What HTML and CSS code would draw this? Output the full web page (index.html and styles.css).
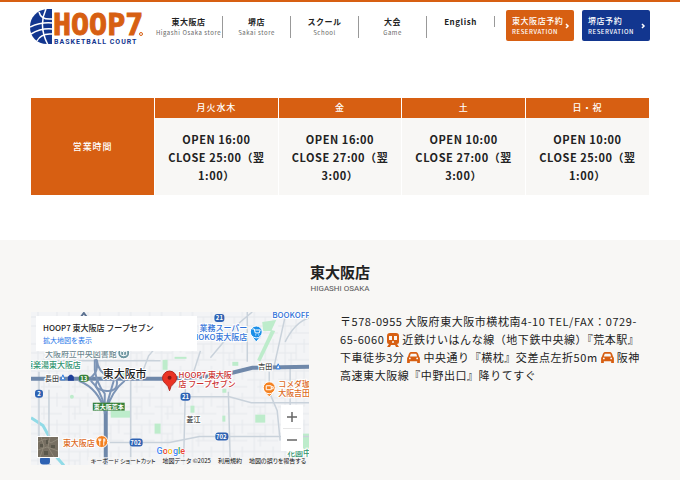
FILE: index.html
```html
<!DOCTYPE html>
<html lang="ja">
<head>
    <meta charset="UTF-8">
    <meta name="viewport" content="width=device-width, initial-scale=1.0">
    <title>HOOP7 BASKETBALL COURT</title>
    <link rel="stylesheet" href="styles.css">
</head>
<body>
    <header class="header">
        <a class="logo" href="#" aria-label="HOOP7 BASKETBALL COURT">
            <svg width="114" height="38" viewBox="0 0 114 38">
                <path d="M22 0H17C7 1 0 8 0 18s7 17 17 17h5z" fill="#12368f"/>
                <g fill="none" stroke="#fff" stroke-width="1.5">
                    <path d="M0 18q11-5 22-4"/>
                    <path d="M9 3q2 8 13 7"/>
                    <path d="M1 25q10-6 21-5"/>
                    <path d="M7 32q4-8 15-7"/>
                    <path d="M16 0q-8 17 2 36"/>
                </g>
                <text class="logo-name" x="23" y="26">HOOP7</text>
                <circle cx="111" cy="25" r="1.5" fill="none" stroke="#d75f12"/>
                <text class="logo-sub" x="24" y="35">BASKETBALL COURT</text>
            </svg>
        </a>
        <nav>
            <ul class="nav">
                <li><a href="#">東大阪店<span>Higashi Osaka store</span></a></li>
                <li><a href="#">堺店<span>Sakai store</span></a></li>
                <li><a href="#">スクール<span>School</span></a></li>
                <li><a href="#">大会<span>Game</span></a></li>
                <li><a href="#">English</a></li>
            </ul>
        </nav>
        <div class="reserve">
            <a class="reserve-btn" href="#">
                <div>東大阪店予約<span>RESERVATION</span></div>
                <svg width="5" height="6" viewBox="0 0 5 6"><path d="M1 1l2 2-2 2"/></svg>
            </a>
            <a class="reserve-btn blue" href="#">
                <div>堺店予約<span>RESERVATION</span></div>
                <svg width="5" height="6" viewBox="0 0 5 6"><path d="M1 1l2 2-2 2"/></svg>
            </a>
        </div>
    </header>

    <main>
        <section class="hours">
            <table>
                <tr>
                    <th rowspan="2" scope="row">営業時間</th>
                    <th scope="col">月火水木</th>
                    <th scope="col">金</th>
                    <th scope="col">土</th>
                    <th scope="col">日・祝</th>
                </tr>
                <tr>
                    <td>OPEN 16:00<br>CLOSE 25:00（翌1:00）</td>
                    <td>OPEN 16:00<br>CLOSE 27:00（翌3:00）</td>
                    <td>OPEN 10:00<br>CLOSE 27:00（翌3:00）</td>
                    <td>OPEN 10:00<br>CLOSE 25:00（翌1:00）</td>
                </tr>
            </table>
        </section>

        <section class="access">
            <h2>東大阪店<span>HIGASHI OSAKA</span></h2>
            <div class="access-row">
                <div class="map">
                    <svg class="map-canvas" viewBox="0 0 279 154">
                        <defs>
                            <pattern id="streets" width="31" height="27" patternUnits="userSpaceOnUse">
                                <path d="M0 5h31M0 14h18M10 21h21M7 0v27M18 5v16M26 0v14M13 14v13" fill="none" stroke="#e5e8ec"/>
                            </pattern>
                        </defs>
                        <rect width="279" height="154" fill="#f3f4f6"/>
                        <rect width="279" height="154" fill="url(#streets)"/>

                        <!-- parks -->
                        <g fill="#bdeccb">
                            <path d="M232 10l14-2-5 11h-8z"/>
                            <path d="M241 18l4 1-15 31-3-2z"/>
                            <rect x="80" y="99" width="20" height="7"/>
                            <rect x="225" y="103" width="10" height="8"/>
                            <rect x="90" y="60" width="7" height="6"/>
                            <rect x="202" y="50" width="6" height="4"/>
                            <rect x="160" y="94" width="4" height="7"/>
                            <rect x="192" y="104" width="3" height="6"/>
                            <rect x="192" y="77" width="4" height="4"/>
                            <rect x="124" y="112" width="6" height="10"/>
                            <rect x="132" y="48" width="5" height="10"/>
                            <rect x="272" y="122" width="7" height="17"/>
                            <circle cx="41" cy="85" r="2"/>
                            <path d="M144 45h12v2h-12z"/>
                        </g>

                        <!-- river -->
                        <path d="M0 106l12 8 10 18 4 14 7 8" fill="none" stroke="#91dbe7" stroke-width="3"/>

                        <!-- local roads -->
                        <g fill="none" stroke="#c9d2db" stroke-width="1.5">
                            <path d="M0 49h130M8 60v80q4 8 12 14M18 78v76M100 68v86"/>
                            <path d="M155 72l-2 82M198 80l2 74M217 0v50M180 46l30-36 12-10"/>
                            <path d="M79 131h60l30-6h110"/>
                            <path d="M155 85h44l22 6h58"/>
                            <path d="M239 60v20l8 19 3 30M255 30q10-20 24-24M260 54v60"/>
                            <path d="M256 0l-12 54"/>
                            <path d="M109 68l9-24 17-20M170 39l-9 28"/>
                        </g>

                        <!-- expressway -->
                        <g fill="none" stroke="#6f88aa" stroke-width="4">
                            <path d="M0 67h136l54-3 32-8 57-1"/>
                            <path d="M75 154V97"/>
                        </g>
                        <g fill="none" stroke="#7c94b6" stroke-width="2">
                            <path d="M64 44v14q2 14 10 24v20"/>
                            <path d="M60 66q9-7 5-20M79 66q-12-6-13-18"/>
                            <path d="M48 69q20 8 26 31M94 69q-13 10-19 31M60 69q10 9 14 27M83 69l-7 24"/>
                            <path d="M68 67q-8 10 6 12t12-11"/>
                        </g>

                        <!-- route shields -->
                        <g class="shield">
                            <rect x="184" y="2" width="10" height="8" rx="3"/><text x="189" y="8">21</text>
                            <rect x="150" y="81" width="10" height="8" rx="3"/><text x="155" y="87">21</text>
                            <rect x="4" y="78" width="8" height="8" rx="3"/><text x="8" y="84">2</text>
                            <rect x="9" y="145" width="10" height="8" rx="3"/>
                            <rect x="99" y="127" width="13" height="8" rx="3"/><text x="105" y="133">702</text>
                            <rect x="185" y="121" width="13" height="8" rx="3"/><text x="191" y="127">702</text>
                            <rect class="green" x="48" y="63" width="10" height="7" rx="3"/><text x="53" y="69">13</text>
                            <rect class="green" x="62" y="91" width="32" height="8"/><text x="78" y="97">東大阪荒本</text>
                        </g>

                        <!-- labels -->
                        <g class="label">
                            <text class="teal" x="14" y="45">大阪府立中央図書館</text>
                            <text class="green-text" x="-6" y="56">極楽湯東大阪店</text>
                            <text class="small" x="14" y="69">長田</text>
                            <text class="city" x="72" y="66">東大阪市</text>
                            <text class="small" x="228" y="57">吉田</text>
                            <text class="small" x="156" y="110">菱江</text>
                            <text class="blue-text" x="242" y="6">BOOKOFF</text>
                            <text class="blue-text end" x="217" y="19">業務スーパー</text>
                            <text class="blue-text end" x="217" y="28">NOKO東大阪店</text>
                            <text class="red" x="148" y="66">HOOP7 東大阪</text>
                            <text class="red" x="148" y="75">店 フープセブン</text>
                            <text class="orange" x="248" y="75">コメダ珈</text>
                            <text class="orange" x="248" y="84">大阪吉田</text>
                            <text class="orange" x="32" y="134">東大阪店</text>
                            <text class="green-text" x="257" y="145">花園中</text>
                        </g>
                        <path d="M30 68l2-5 2 5zM246 57l2-5 2 5z" fill="#fff" stroke="#2f7de0"/>
                        <path d="M37 69v-4l2-2h2l2 2v4z" fill="#1d3f99"/>
                        <path d="M50 5l3-4 3 4" fill="none" stroke="#5b7190" stroke-width="2"/>

                        <!-- place markers -->
                        <g stroke="#fff">
                            <circle cx="93" cy="41" r="6" fill="#6e96a0"/>
                            <path d="M221 24l5 6 5-6z" fill="#1a8fe8"/>
                            <circle cx="226" cy="20" r="6" fill="#1a8fe8"/>
                            <path d="M234 80l5 5 5-5z" fill="#f48120"/>
                            <circle cx="239" cy="76" r="6" fill="#f48120"/>
                            <circle cx="71" cy="130" r="6" fill="#f48120"/>
                        </g>
                        <g fill="none" stroke="#fff">
                            <path d="M90 39l3 1 3-1v4l-3 1-3-1zM93 40v4"/>
                            <path d="M222 17h2l1 4h4l1-3h-5M225 23h1M228 23h1"/>
                            <path d="M236 74h5v4h-5zM241 75h2v2h-2"/>
                            <path d="M69 127v7M68 127v2h2v-2M73 127v7M74 127v3"/>
                        </g>
                        <path d="M139 79q-1-5-4-7a7 7 0 1 1 8 0q-3 2-4 7z" fill="#ea3324" stroke="#b3261e"/>
                        <circle cx="139" cy="66" r="2" fill="#8c1510"/>

                        <text class="google" x="126" y="142"><tspan fill="#4285f4">G</tspan><tspan fill="#ea4335">o</tspan><tspan fill="#fbbc05">o</tspan><tspan fill="#4285f4">g</tspan><tspan fill="#34a853">l</tspan><tspan fill="#ea4335">e</tspan></text>
                    </svg>
                    <div class="map-card">
                        <strong>HOOP7 東大阪店 フープセブン</strong>
                        <a href="#">拡大地図を表示</a>
                    </div>
                    <button class="map-thumb" type="button" aria-label="航空写真">
                        <svg width="20" height="20" viewBox="0 0 20 20">
                            <rect width="20" height="20" fill="#776f62"/>
                            <path d="M0 5l7-3 6 4 7-4M3 0l3 9-4 11M12 0l-2 10 6 10M0 13l9-3 11 4" fill="none" stroke="#8f8879"/>
                            <path d="M2 7h3v3H2zM13 8h4v3h-4zM6 14h4v4H6zM8 3h2v4H8z" fill="#5a574b"/>
                        </svg>
                    </button>
                    <div class="map-zoom">
                        <button type="button" aria-label="ズームイン"><svg width="10" height="10" viewBox="0 0 10 10"><path d="M0 5h10M5 0v10"/></svg></button>
                        <button type="button" aria-label="ズームアウト"><svg width="10" height="10" viewBox="0 0 10 10"><path d="M0 5h10"/></svg></button>
                    </div>
                    <div class="map-credit">
                        <span>キーボード ショートカット</span>
                        <span>地図データ ©2025</span>
                        <span>利用規約</span>
                        <span>地図の誤りを報告する</span>
                    </div>
                </div>
                <p class="address">
                    〒578-0955 大阪府東大阪市横枕南4-10 TEL/FAX：0729-65-6060
                    <svg class="icon" viewBox="0 0 12 14"><path d="M3 0h6q3 0 3 3v6q0 2-2 2l2 3H9l-1-2H4l-1 2H0l2-3q-2 0-2-2V3q0-3 3-3zM2 3v4h3V3zM7 3v4h3V3zM6 8a1 1 0 1 0 0 2 1 1 0 0 0 0-2z" fill-rule="evenodd"/></svg>
                    近鉄けいはんな線（地下鉄中央線）『荒本駅』下車徒歩3分
                    <svg class="icon car" viewBox="0 0 14 12"><path d="M4 0h6q1 0 2 2l1 3q1 1 1 2v5h-3v-2H3v2H0V7q0-1 1-2l1-3q1-2 2-2zM4 2L3 5h8l-1-3zM3 6a1 1 0 1 0 0 2 1 1 0 0 0 0-2zM11 6a1 1 0 1 0 0 2 1 1 0 0 0 0-2z" fill-rule="evenodd"/></svg>
                    中央通り『横枕』交差点左折50m
                    <svg class="icon car" viewBox="0 0 14 12"><path d="M4 0h6q1 0 2 2l1 3q1 1 1 2v5h-3v-2H3v2H0V7q0-1 1-2l1-3q1-2 2-2zM4 2L3 5h8l-1-3zM3 6a1 1 0 1 0 0 2 1 1 0 0 0 0-2zM11 6a1 1 0 1 0 0 2 1 1 0 0 0 0-2z" fill-rule="evenodd"/></svg>
                    阪神高速東大阪線『中野出口』降りてすぐ
                </p>
            </div>
        </section>
    </main>
</body>
</html>
```

FILE: styles.css
```css
* {
    box-sizing: border-box;
}

body {
    margin: 0;
    min-height: 100vh;
    display: flex;
    flex-direction: column;
    font-family: "Noto Sans CJK JP", sans-serif;
    font-size: 11px;
    line-height: 18px;
    letter-spacing: 0.05em;
    color: #222;
    background: #fff;
}

a {
    color: inherit;
    text-decoration: none;
}

main {
    flex: 1;
    display: flex;
    flex-direction: column;
}

/* header */
.header {
    display: flex;
    align-items: flex-start;
    padding: 7px 30px 0;
    border-top: 2px solid #d75f12;
}

.logo svg {
    display: block;
}

.logo-name {
    font-family: "DejaVu Sans Mono", monospace;
    font-size: 30px;
    font-weight: bold;
    letter-spacing: 0;
    fill: #d75f12;
    stroke: #d75f12;
}

.logo-sub {
    font-family: Roboto, sans-serif;
    font-size: 7px;
    font-weight: bold;
    letter-spacing: 1px;
    fill: #12368f;
}

.nav {
    display: flex;
    align-items: flex-start;
    list-style: none;
    margin: 7px 0 0 11px;
    padding: 0;
}

.nav li {
    width: 68px;
    border-right: 1px solid #999;
    text-align: center;
    font-size: 8px;
    font-weight: bold;
    line-height: 11px;
    white-space: nowrap;
}

.nav a {
    display: flex;
    flex-direction: column;
    align-items: center;
}

.nav span {
    font-size: 6px;
    font-weight: normal;
    color: #666;
}

.reserve {
    display: flex;
    gap: 8px;
    margin: 1px 0 0 auto;
}

.reserve-btn {
    display: flex;
    align-items: center;
    justify-content: space-between;
    width: 68px;
    height: 31px;
    padding: 0 4px 0 6px;
    border-radius: 2px;
    background: #d75f12;
    color: #fff;
    font-size: 8px;
    font-weight: 500;
    line-height: 11px;
    white-space: nowrap;
}

.reserve-btn.blue {
    background: #12368f;
}

.reserve-btn span {
    display: block;
    font-size: 6px;
}

.reserve-btn path {
    fill: none;
    stroke: #fff;
    stroke-width: 1.5px;
}

/* opening hours */
.hours {
    padding: 51px 31px 45px;
}

.hours table {
    width: 100%;
    table-layout: fixed;
    border-collapse: collapse;
}

.hours th {
    height: 20px;
    padding: 0;
    border-left: 1px solid #fff;
    background: #d75f12;
    color: #fff;
    font-size: 9px;
    font-weight: 500;
    letter-spacing: 0.1em;
}

.hours th:first-child {
    border-left: 0;
}

.hours td {
    padding: 12px 8px 11px;
    border-left: 1px solid #fff;
    background: #f8f7f5;
    font-weight: bold;
    text-align: center;
}

/* access */
.access {
    flex: 1;
    padding: 21px 31px 12px;
    background: #f8f7f5;
}

.access h2 {
    margin: 0 0 18px;
    font-size: 15px;
    line-height: 22px;
    letter-spacing: 0;
    text-align: center;
}

.access h2 span {
    display: block;
    font-family: Roboto, sans-serif;
    font-size: 8px;
    font-weight: normal;
    line-height: 11px;
    color: #555;
}

.access-row {
    display: flex;
    justify-content: space-between;
    align-items: flex-start;
}

.map {
    position: relative;
    width: 45%;
    letter-spacing: 0;
}

.map-canvas {
    display: block;
    width: 100%;
}

.label {
    font-size: 8px;
    font-weight: 500;
    fill: #444;
    stroke: #fff;
    stroke-width: 2px;
    paint-order: stroke;
}

.label .small { font-size: 7px; }
.label .city { font-size: 11px; fill: #222; }
.label .teal { fill: #6e8990; }
.label .green-text { fill: #2f9470; }
.label .blue-text { fill: #2f72d8; }
.label .red { fill: #cc3333; }
.label .orange { fill: #dc691c; }
.label .end { text-anchor: end; }

.shield {
    font-size: 6px;
    font-weight: bold;
    text-anchor: middle;
    fill: #2e62b3;
}

.shield text { fill: #fff; }
.shield .green { fill: #38823c; }

.google {
    font-family: Roboto, sans-serif;
    font-size: 9px;
    font-weight: 500;
    stroke: #fff;
    stroke-width: 1px;
    paint-order: stroke;
}

.map-card {
    position: absolute;
    top: 4px;
    left: 5px;
    display: flex;
    flex-direction: column;
    width: 161px;
    padding: 5px 7px 4px;
    background: #fff;
    font-size: 7px;
    line-height: 13px;
    white-space: nowrap;
}

.map-card strong {
    font-size: 8px;
    font-weight: 500;
}

.map-card a {
    color: #1a73e8;
}

.map-thumb {
    position: absolute;
    left: 6px;
    bottom: 7px;
    width: 22px;
    height: 22px;
    padding: 0;
    border: 1px solid #fff;
    background: #776f62;
}

.map-thumb svg {
    display: block;
}

.map-zoom {
    position: absolute;
    right: 6px;
    bottom: 14px;
    width: 22px;
    padding: 0 2px;
    background: #fff;
}

.map-zoom button {
    display: flex;
    align-items: center;
    justify-content: center;
    width: 100%;
    height: 23px;
    padding: 0;
    border: 0;
    background: none;
}

.map-zoom button + button {
    border-top: 1px solid #e6e6e6;
}

.map-zoom path {
    fill: none;
    stroke: #666;
    stroke-width: 1.5px;
}

.map-credit {
    position: absolute;
    right: 0;
    bottom: 0;
    display: flex;
    gap: 7px;
    padding: 0 3px;
    background: rgba(245, 245, 245, 0.7);
    font-size: 6px;
    font-feature-settings: "palt";
    line-height: 8px;
    color: #111;
    white-space: nowrap;
}

.address {
    width: 50%;
    margin: 0;
}

.icon {
    width: 12px;
    height: 14px;
    vertical-align: -3px;
    fill: #d75f12;
}

.icon.car {
    width: 13px;
    height: 11px;
    vertical-align: -1px;
}
```
